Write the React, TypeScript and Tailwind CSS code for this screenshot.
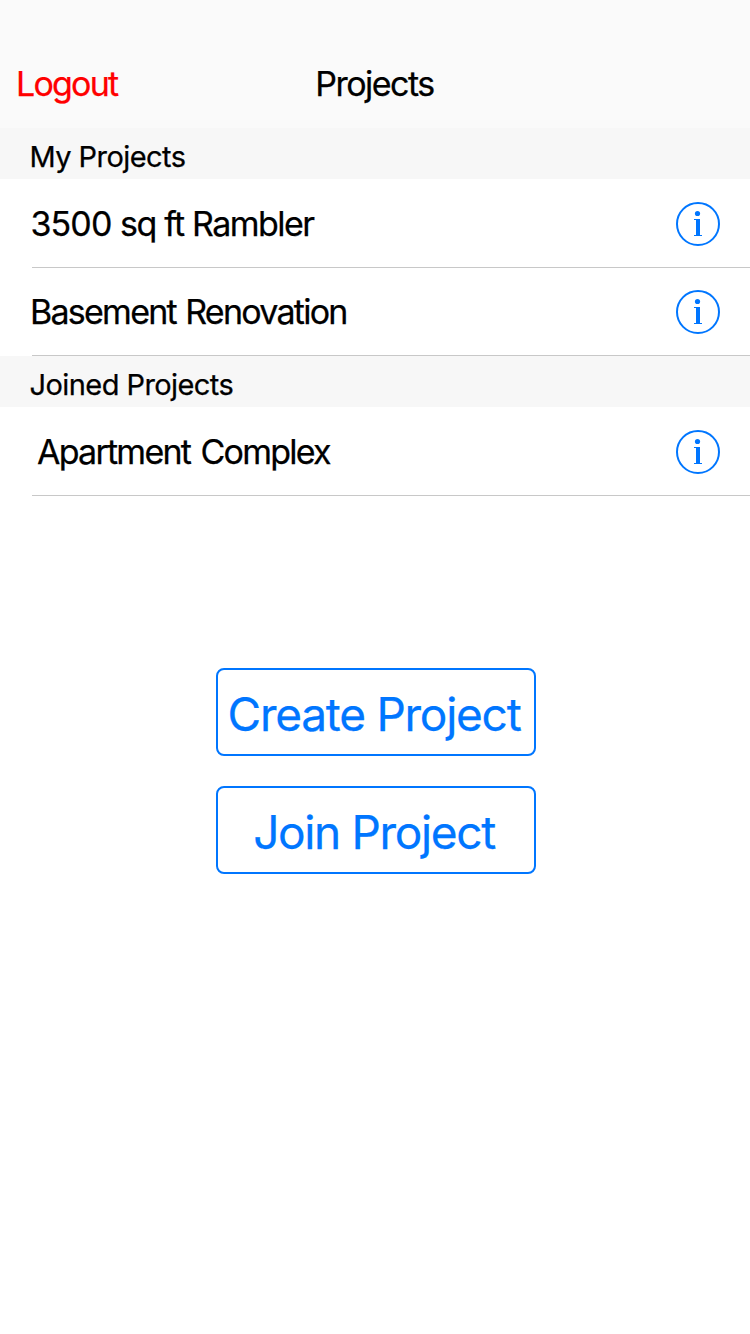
import type { ReactNode } from "react";

function InfoIcon() {
  return (
    <svg width="44" height="44" viewBox="0 0 44 44" fill="none" className="shrink-0">
      <circle cx="22" cy="22" r="21" stroke="#0076ff" strokeWidth="2" />
      <circle cx="21.5" cy="11.5" r="2.6" fill="#0076ff" />
      <path d="M18 17H24V33H26V34H18V33H20V18H18Z" fill="#0076ff" />
    </svg>
  );
}

function SectionHeader({ children }: { children: ReactNode }) {
  return (
    <h2 className="flex h-[51px] items-center bg-[#f7f7f7] pl-[29.5px] pt-[5px] text-[29px] leading-none tracking-[-0.57px]">
      {children}
    </h2>
  );
}

function Row({ children, className, textClass }: { children: ReactNode; className: string; textClass: string }) {
  return (
    <li className={`ml-8 flex items-center justify-between border-b border-[#c8c8c8] pr-[30px] ${className}`}>
      <span className={`whitespace-nowrap text-[34px] leading-none ${textClass}`}>{children}</span>
      <button aria-label="Project info">
        <InfoIcon />
      </button>
    </li>
  );
}

export default function App() {
  return (
    <div className="flex h-[1334px] w-[750px] flex-col bg-white font-['Inter',sans-serif] text-black [-webkit-text-stroke:0.25px]">
      <header className="grid h-32 grid-cols-3 items-center bg-[#fafafa] pt-10 text-[34px] leading-none">
        <button className="justify-self-start pl-4 tracking-[-1.8px] text-[#ff0000]">Logout</button>
        <h1 className="pr-px text-center tracking-[-1.5px]">Projects</h1>
      </header>

      <SectionHeader>My Projects</SectionHeader>
      <ul>
        <Row className="h-[89px] pt-0.5" textClass="-ml-[1.5px] tracking-[-1.55px] [word-spacing:0.5px]">
          <span className="tracking-[-0.9px]">3500</span> sq ft Rambler
        </Row>
        <Row className="h-[88px] pt-px" textClass="-ml-0.5 tracking-[-1.75px] [word-spacing:1.5px]">Basement Renovation</Row>
      </ul>
      <SectionHeader>Joined Projects</SectionHeader>
      <ul>
        <Row className="h-[89px] pt-0.5" textClass="ml-[5px] tracking-[-1.76px] [word-spacing:2.5px]">Apartment Complex</Row>
      </ul>

      <div className="mt-[172px] ml-[216px] flex w-80 flex-col gap-[30px] text-[46px] leading-none text-[#0076ff]">
        <button className="h-[88px] whitespace-nowrap rounded-lg border-2 border-[#0076ff] pt-1 pr-1 tracking-[-1.25px]">
          Create Project
        </button>
        <button className="h-[88px] whitespace-nowrap rounded-lg border-2 border-[#0076ff] pt-1 pr-1 tracking-[-1.35px]">
          Join Project
        </button>
      </div>
    </div>
  );
}
